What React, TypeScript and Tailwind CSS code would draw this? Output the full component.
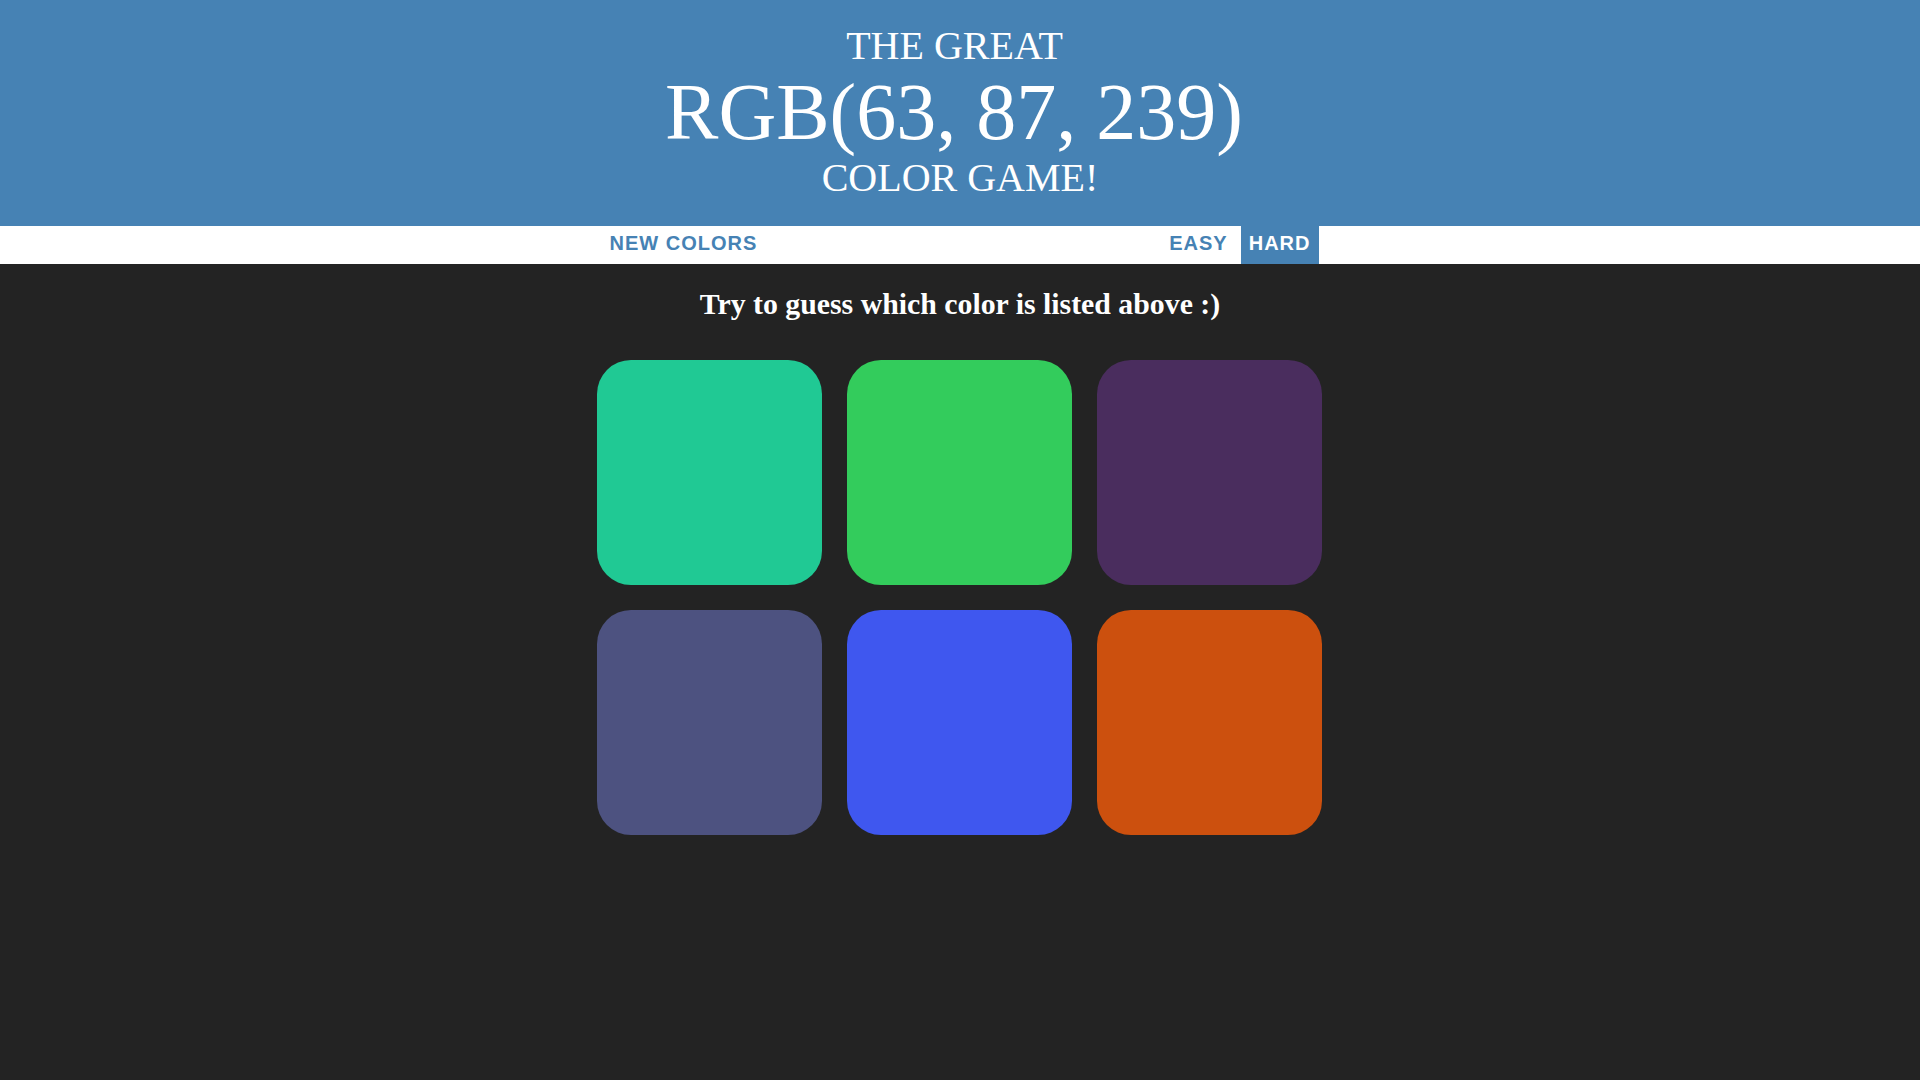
import { useState } from "react";

const squares = [
  "rgb(32, 201, 148)",
  "rgb(51, 204, 92)",
  "rgb(74, 45, 94)",
  "rgb(77, 82, 128)",
  "rgb(63, 87, 239)",
  "rgb(204, 80, 14)",
];

export default function App() {
  const [mode, setMode] = useState<"easy" | "hard">("hard");

  return (
    <div className="min-h-screen bg-[#232323] font-['Liberation_Serif',serif]">
      {/* header */}
      <h1 className="bg-[#4682b4] pt-[24px] pb-[26px] text-center font-normal uppercase text-white">
        <span className="block pr-[11px] text-[40px] leading-[44px]">The Great</span>
        <span className="block pr-[12px] text-[80px] leading-[88px]">RGB(63, 87, 239)</span>
        <span className="block text-[40px] leading-[44px]">Color Game!</span>
      </h1>

      {/* stripe */}
      <div className="h-[38px] bg-white">
        <div className="mx-auto flex h-full w-[717px] justify-between font-['Liberation_Sans',sans-serif] text-[20px] font-bold tracking-[1px]">
          <button className="h-full px-2 pb-[4px] uppercase text-[#4682b4]">New Colors</button>
          <div className="flex h-full gap-[5px]">
            <button
              onClick={() => setMode("easy")}
              className={`h-full px-2 pb-[4px] uppercase ${mode === "easy" ? "bg-[#4682b4] text-white" : "text-[#4682b4]"}`}
            >
              Easy
            </button>
            <button
              onClick={() => setMode("hard")}
              className={`h-full px-2 pb-[4px] uppercase ${mode === "hard" ? "bg-[#4682b4] text-white" : "text-[#4682b4]"}`}
            >
              Hard
            </button>
          </div>
        </div>
      </div>

      <p className="mt-[23px] text-center text-[29.8px] font-bold leading-[34px] text-white">
        Try to guess which color is listed above :)
      </p>

      {/* squares */}
      <div className="mx-auto mt-[39px] grid w-[726px] grid-cols-[225px_225px_225px] gap-[25px]">
        {squares.map((c) => (
          <div key={c} className="h-[225px] w-[225px] rounded-[34px]" style={{ backgroundColor: c }} />
        ))}
      </div>
    </div>
  );
}
